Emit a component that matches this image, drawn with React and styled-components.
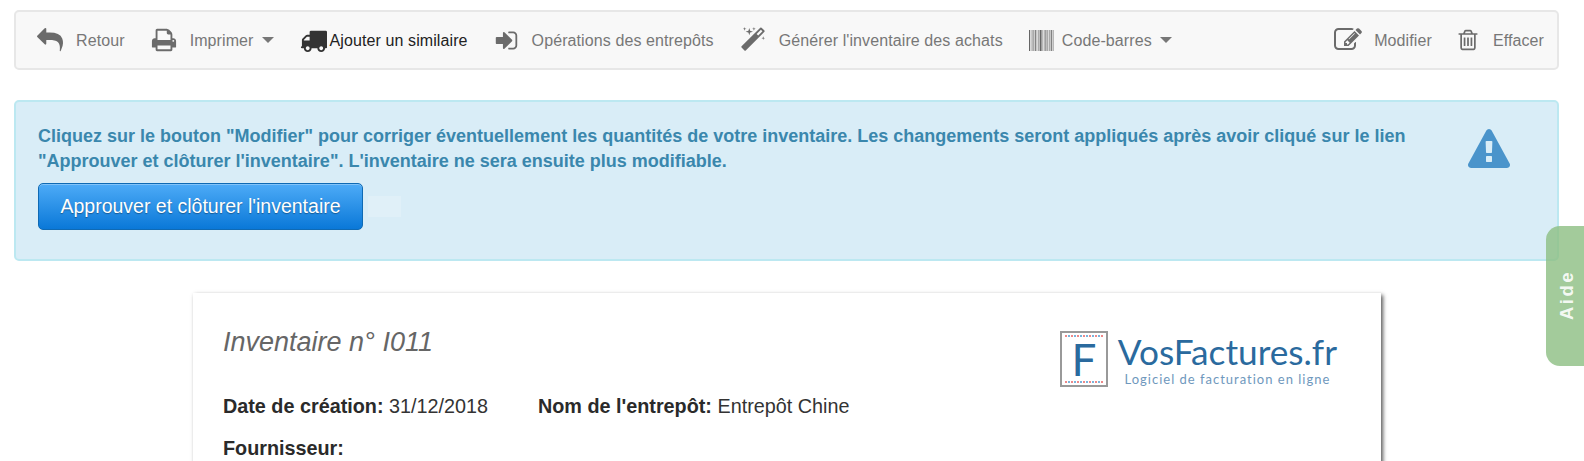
import React from 'react'
import styled, { createGlobalStyle } from 'styled-components'

const GlobalStyle = createGlobalStyle`
	html, body {
		margin: 0;
		height: 461px;
		overflow: hidden;
		background: #fff;
		font-family: "Liberation Sans", Arial, sans-serif;
		color: #333;
	}
`

const icons = {
	reply: 'M1792 1120q0 166-127 451-3 7-10.500 24t-13.500 30-13 22q-12 17-28 17-15 0-23.500-10t-8.500-25q0-9 2.500-26.500t2.500-23.500q5-68 5-123 0-101-17.500-181t-48.500-138.500-80-101-105.500-69.500-133-42.500-154-21.500-175.500-6h-224v256q0 26-19 45t-45 19-45-19l-512-512q-19-19-19-45t19-45l512-512q19-19 45-19t45 19 19 45v256h224q713 0 875 403 53 134 53 333z',
	print: 'M448 1536h896v-256h-896v256zm0-640h896v-384h-160q-40 0-68-28t-28-68v-160h-640v640zm1152 64q0-26-19-45t-45-19-45 19-19 45 19 45 45 19 45-19 19-45zm128 0v416q0 13-9.500 22.500t-22.500 9.500h-224v160q0 40-28 68t-68 28h-960q-40 0-68-28t-28-68v-160h-224q-13 0-22.500-9.500t-9.500-22.500v-416q0-79 56.500-135.500t135.500-56.500h64v-544q0-40 28-68t68-28h672q40 0 88 20t76 48l152 152q28 28 48 76t20 88v256h64q79 0 135.500 56.500t56.500 135.500z',
	truck: 'M640 1408q0-52-38-90t-90-38-90 38-38 90 38 90 90 38 90-38 38-90zm-384-512h384v-256h-158q-13 0-22 9l-195 195q-9 9-9 22v30zm1280 512q0-52-38-90t-90-38-90 38-38 90 38 90 90 38 90-38 38-90zm256-1088v1024q0 15-4 26.500t-13.500 18.500-16.500 11.500-23.500 6-22.500 2-25.500 0-22.500-.5q0 106-75 181t-181 75-181-75-75-181h-384q0 106-75 181t-181 75-181-75-75-181h-64q-3 0-22.500.5t-25.500 0-22.500-2-23.500-6-16.500-11.500-13.500-18.500-4-26.500q0-26 19-45t45-19v-320q0-8-.5-35t0-38 2.500-34.500 6.500-37 14-30.500 22.500-30l198-198q19-19 50.500-32t58.500-13h160v-192q0-26 19-45t45-19h1024q26 0 45 19t19 45z',
	signIn: 'M1312 896q0 26-19 45l-544 544q-19 19-45 19t-45-19-19-45v-288h-448q-26 0-45-19t-19-45v-384q0-26 19-45t45-19h448v-288q0-26 19-45t45-19 45 19l544 544q19 19 19 45zm352-352v704q0 119-84.500 203.500t-203.500 84.500h-320q-13 0-22.500-9.500t-9.500-22.500q0-4-1-20t-.5-26.500 3-23.500 10-19.500 20.500-6.500h320q66 0 113-47t47-113v-704q0-66-47-113t-113-47h-312l-11.500-1-11.500-3-8-5.500-7-9-2-13.500q0-4-1-20t-.5-26.500 3-23.500 10-19.500 20.500-6.500h320q119 0 203.500 84.500t84.500 203.500z',
	magic: 'M1254 581l293-293-107-107-293 293zm447-293q0 27-18 45l-1286 1286q-18 18-45 18t-45-18l-198-198q-18-18-18-45t18-45l1286-1286q18-18 45-18t45 18l198 198q18 18 18 45zm-1351-190l98 30-98 30-30 98-30-98-98-30 98-30 30-98zm350 162l196 60-196 60-60 196-60-196-196-60 196-60 60-196zm930 478l98 30-98 30-30 98-30-98-98-30 98-30 30-98zm-640-640l98 30-98 30-30 98-30-98-98-30 98-30 30-98z',
	edit: 'M888 1184l116-116-152-152-116 116v56h96v96h56zm440-720q-16-16-33 1l-350 350q-17 17-1 33t33-1l350-350q17-17 1-33zm80 594v190q0 119-84.500 203.500t-203.500 84.500h-832q-119 0-203.500-84.500t-84.500-203.500v-832q0-119 84.500-203.500t203.500-84.500h832q63 0 117 25 15 7 18 23 3 17-9 29l-49 49q-14 14-32 8-23-6-45-6h-832q-66 0-113 47t-47 113v832q0 66 47 113t113 47h832q66 0 113-47t47-113v-126q0-13 9-22l64-64q15-15 35-7t20 29zm-96-738l288 288-672 672h-288v-288zm444 132l-92 92-288-288 92-92q28-28 68-28t68 28l152 152q28 28 28 68t-28 68z',
	trash: 'M704 736v576q0 14-9 23t-23 9h-64q-14 0-23-9t-9-23v-576q0-14 9-23t23-9h64q14 0 23 9t9 23zm256 0v576q0 14-9 23t-23 9h-64q-14 0-23-9t-9-23v-576q0-14 9-23t23-9h64q14 0 23 9t9 23zm256 0v576q0 14-9 23t-23 9h-64q-14 0-23-9t-9-23v-576q0-14 9-23t23-9h64q14 0 23 9t9 23zm128 724v-948h-896v948q0 22 7 40.500t14.500 27 10.500 8.500h832q3 0 10.500-8.500t14.500-27 7-40.500zm-672-1076h448l-48-117q-7-9-17-11h-317q-10 2-17 11zm928 32v64q0 14-9 23t-23 9h-96v948q0 83-47 143.500t-113 60.500h-832q-66 0-113-58.500t-47-141.500v-952h-96q-14 0-23-9t-9-23v-64q0-14 9-23t23-9h309l70-167q15-37 54-63t79-26h320q40 0 79 26t54 63l70 167h309q14 0 23 9t9 23z',
	warning: 'M1024 1375v-190q0-14-9.500-23.500t-22.500-9.500h-192q-13 0-22.500 9.500t-9.500 23.500v190q0 14 9.500 23.500t22.500 9.500h192q13 0 22.500-9.500t9.500-23.500zm-2-374l18-459q0-12-10-19-13-11-24-11h-220q-11 0-24 11-10 7-10 21l17 457q0 10 10 16.500t24 6.500h185q14 0 23.500-6.500t10.500-16.500zm-14-934l768 1408q35 63-2 126-17 29-46.500 46t-63.500 17h-1536q-34 0-63.500-17t-46.500-46q-37-63-2-126l768-1408q17-31 47-49t65-18 65 18 47 49z'
}

const barWidths = [1, 1, 2, 1, 1, 1, 2, 1, 1, 1, 1, 2, 1, 1, 1, 2]

function Icon ({name, size}) {
	return (
		<svg width={size} height={size} viewBox="0 0 1792 1792" fill="currentColor">
			<path d={icons[name]} />
		</svg>
	)
}

function Barcode () {
	let x = 0
	return (
		<svg width="25" height="21" viewBox="0 0 25 21">
			{barWidths.map((w, i) => {
				const bar = <rect key={i} x={x} y="0" width={w} height="21" fill={i % 3 === 0 ? '#666' : '#aaa'} />
				x += w + .6
				return bar
			})}
		</svg>
	)
}

const Page = styled.div`
	height: 461px;
	box-sizing: border-box;
	padding: 10px 25px 0 14px;
	display: flex;
	flex-direction: column;
`

const Toolbar = styled.div`
	flex: none;
	height: 60px;
	box-sizing: border-box;
	border: 2px solid #e7e7e7;
	border-radius: 5px;
	background: #f8f8f8;
	display: flex;
	align-items: center;
	justify-content: space-between;
	padding: 0 13px 0 21px;
`

const ToolGroup = styled.div`
	display: flex;
	align-items: center;
	gap: ${props => props.gap || 26}px;
`

const Tool = styled.a`
	display: flex;
	align-items: center;
	gap: ${props => props.gap ?? 13}px;
	font-size: 16px;
	line-height: 20px;
	letter-spacing: .1px;
	color: ${props => props.dark ? '#222' : '#777'};
	white-space: nowrap;
	svg {
		color: ${props => props.dark ? '#333' : '#6b6b6b'};
		display: block;
	}
`

const ToolLabel = styled.span`
	padding-top: 2px;
`

const Caret = styled.span`
	width: 0;
	height: 0;
	margin-left: -18px;
	border-left: 6px solid transparent;
	border-right: 6px solid transparent;
	border-top: 6px solid #777;
`

const Alert = styled.div`
	flex: none;
	margin-top: 30px;
	height: 161px;
	box-sizing: border-box;
	border: 2px solid #bce8f1;
	border-radius: 5px;
	background: #d9edf7;
	padding: 22px 47px 0 22px;
	display: flex;
	justify-content: space-between;
	color: #3a87ad;
`

const AlertBody = styled.div`
	width: 1375px;
`

const AlertText = styled.p`
	margin: 0;
	font-size: 18px;
	font-weight: bold;
	line-height: 25px;
`

const AlertActions = styled.div`
	display: flex;
	align-items: center;
	gap: 5px;
	margin-top: 9px;
`

const PrimaryButton = styled.button`
	width: 325px;
	height: 47px;
	padding: 0;
	border: 1px solid #0f6ab4;
	border-radius: 5px;
	background: linear-gradient(#4dabf7, #0a78d8);
	box-shadow: inset 0 1px 0 rgba(255, 255, 255, .3);
	color: #fff;
	font: 19.5px "Liberation Sans", Arial, sans-serif;
	text-shadow: 0 1px 1px rgba(0, 0, 0, .35);
`

const GhostMark = styled.span`
	display: block;
	width: 33px;
	height: 21px;
	background: #e0f0f8;
`

const AlertIcon = styled.div`
	color: #4a94cb;
	margin-top: 5px;
	svg { display: block; }
`

const Paper = styled.div`
	flex: 1;
	margin: 32px 0 0 179px;
	width: 1188px;
	box-sizing: border-box;
	background: #fff;
	box-shadow: 2px 2px 4px rgba(0, 0, 0, .65);
	padding: 32px 30px 0;
	display: flex;
	justify-content: space-between;
`

const Title = styled.h1`
	margin: 0 0 36px;
	font-size: 27px;
	line-height: 34px;
	font-weight: normal;
	font-style: italic;
	color: #666;
`

const InfoRow = styled.div`
	display: flex;
	gap: 50px;
	font-size: 19.8px;
	line-height: 22px;
	margin-bottom: 20px;
	color: #333;
	b { color: #2a2a2a; }
`

const Logo = styled.div`
	display: flex;
	gap: 10px;
	margin: 6px 14px 0 0;
	height: 56px;
`

const LogoBox = styled.div`
	width: 48px;
	height: 56px;
	box-sizing: border-box;
	border: 2px solid #999;
	display: flex;
	align-items: center;
	justify-content: center;
	font: 400 44px "Lato", sans-serif;
	line-height: 1;
	color: #2a6a9e;
	position: relative;
	&::before, &::after {
		content: "";
		position: absolute;
		left: 3px;
		right: 3px;
		height: 2px;
		background: repeating-linear-gradient(90deg, #e88 0 2px, transparent 2px 3px, #7ab4dc 3px 5px, transparent 5px 6px);
	}
	&::before { top: 2px; }
	&::after { bottom: 2px; }
`

const LogoText = styled.div`
	display: flex;
	flex-direction: column;
	align-items: center;
	margin-top: -1px;
	color: #2a6a9e;
	font-family: "Lato", sans-serif;
`

const LogoName = styled.div`
	font-size: 35.2px;
	line-height: 42px;
`

const LogoTagline = styled.div`
	font-size: 13px;
	line-height: 14px;
	letter-spacing: 1px;
	color: #6f98bd;
`

const HelpTab = styled.div`
	position: absolute;
	right: 0;
	top: 226px;
	width: 38px;
	height: 140px;
	padding: 0 0 3px 4px;
	box-sizing: border-box;
	border-radius: 14px 0 0 14px;
	background: rgba(140, 190, 130, .8);
	color: rgba(255, 255, 255, .9);
	font-size: 18.5px;
	font-weight: bold;
	letter-spacing: 2.5px;
	display: flex;
	align-items: center;
	justify-content: center;
	span {
		transform: rotate(-90deg);
	}
`

export default function App () {
	return (
		<Page>
			<GlobalStyle />
			<Toolbar>
				<ToolGroup>
					<Tool><Icon name="reply" size={26} /><ToolLabel>Retour</ToolLabel></Tool>
					<Tool><Icon name="print" size={26} /><ToolLabel>Imprimer</ToolLabel></Tool>
					<Caret />
					<Tool dark gap={3}><Icon name="truck" size={27} /><ToolLabel>Ajouter un similaire</ToolLabel></Tool>
					<Tool><Icon name="signIn" size={25} /><ToolLabel>Opérations des entrepôts</ToolLabel></Tool>
					<Tool><Icon name="magic" size={26} /><ToolLabel>Générer l'inventaire des achats</ToolLabel></Tool>
					<Tool gap={8}><Barcode /><ToolLabel>Code-barres</ToolLabel></Tool>
					<Caret />
				</ToolGroup>
				<ToolGroup gap={24}>
					<Tool gap={12}><Icon name="edit" size={28} /><ToolLabel>Modifier</ToolLabel></Tool>
					<Tool><Icon name="trash" size={24} /><ToolLabel>Effacer</ToolLabel></Tool>
				</ToolGroup>
			</Toolbar>
			<Alert>
				<AlertBody>
					<AlertText>
						Cliquez sur le bouton "Modifier" pour corriger éventuellement les quantités de votre inventaire. Les changements seront appliqués après avoir cliqué sur le lien "Approuver et clôturer l'inventaire". L'inventaire ne sera ensuite plus modifiable.
					</AlertText>
					<AlertActions>
						<PrimaryButton>Approuver et clôturer l'inventaire</PrimaryButton>
						<GhostMark />
					</AlertActions>
				</AlertBody>
				<AlertIcon><Icon name="warning" size={42} /></AlertIcon>
			</Alert>
			<Paper>
				<div>
					<Title>Inventaire n° I011</Title>
					<InfoRow>
						<span><b>Date de création:</b> 31/12/2018</span>
						<span><b>Nom de l'entrepôt:</b> Entrepôt Chine</span>
					</InfoRow>
					<InfoRow><b>Fournisseur:</b></InfoRow>
				</div>
				<Logo>
					<LogoBox>F</LogoBox>
					<LogoText>
						<LogoName>VosFactures.fr</LogoName>
						<LogoTagline>Logiciel de facturation en ligne</LogoTagline>
					</LogoText>
				</Logo>
			</Paper>
			<HelpTab><span>Aide</span></HelpTab>
		</Page>
	)
}
